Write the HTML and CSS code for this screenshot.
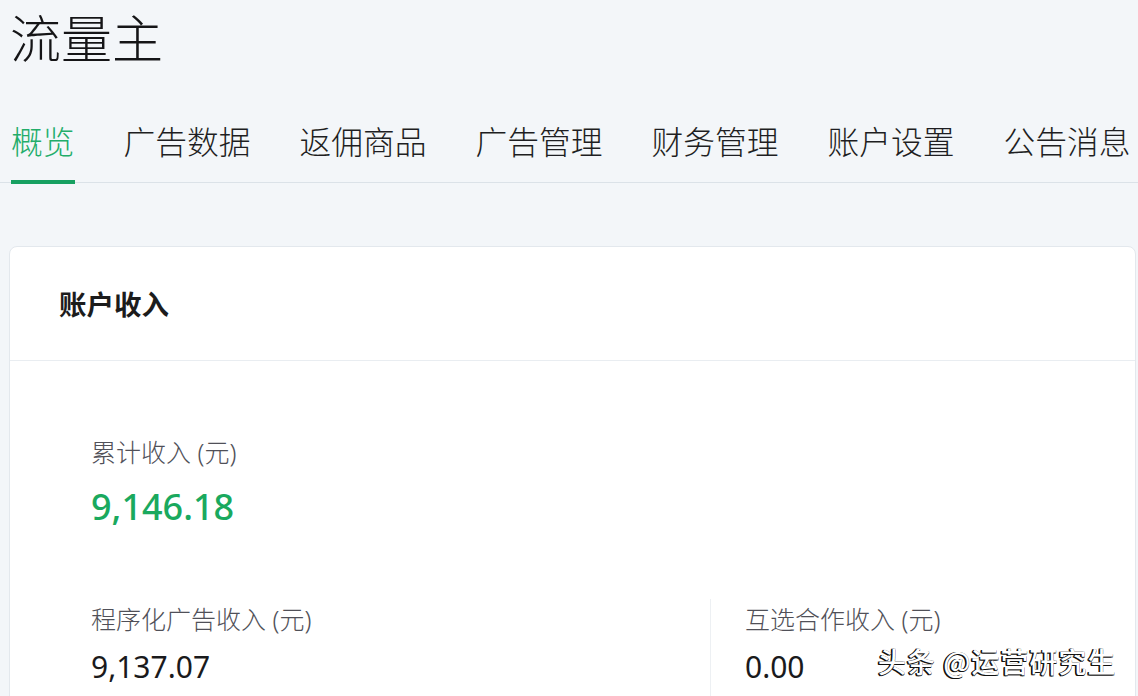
FILE: index.html
```html
<!DOCTYPE html>
<html lang="zh-CN">
<head>
<meta charset="utf-8">
<title>流量主</title>
<link rel="stylesheet" href="styles.css">
</head>
<body>
<div class="page">
  <h1 class="title">流量主</h1>
  <nav class="tabs">
    <a class="tab active">概览</a>
    <a class="tab">广告数据</a>
    <a class="tab">返佣商品</a>
    <a class="tab">广告管理</a>
    <a class="tab">财务管理</a>
    <a class="tab">账户设置</a>
    <a class="tab">公告消息</a>
  </nav>
  <section class="card">
    <div class="card-head">账户收入</div>
    <div class="card-body">
      <div class="stat total">
        <div class="label">累计收入 (元)</div>
        <div class="value green">9,146.18</div>
      </div>
      <div class="row">
        <div class="cell">
          <div class="label">程序化广告收入 (元)</div>
          <div class="value">9,137.07</div>
        </div>
        <div class="cell split">
          <div class="label">互选合作收入 (元)</div>
          <div class="value">0.00</div>
        </div>
      </div>
    </div>
  </section>
  <div class="watermark">头条 @运营研究生</div>
</div>
</body>
</html>
```
FILE: styles.css
```css
html, body {
  margin: 0;
  padding: 0;
  background: #f3f6f9;
  height: 696px;
  overflow: hidden;
}
body {
  font-family: "Noto Sans", "Noto Sans CJK SC", sans-serif;
  color: #1d1d20;
}
.page {
  position: relative;
  height: 696px;
  overflow: hidden;
}
.title {
  margin: 11px 0 0 0;
  padding-left: 10px;
  font-family: "Noto Sans CJK SC", sans-serif;
  font-weight: 300;
  font-size: 51px;
  line-height: 51px;
  height: 51px;
  color: #151517;
}
.tabs {
  display: flex;
  gap: 49px;
  margin-top: 63px;
  padding-left: 11px;
  border-bottom: 1px solid #dbe2e8;
}
.tab {
  font-family: "Noto Sans CJK SC", sans-serif;
  font-weight: 300;
  font-size: 31.75px;
  line-height: 31.75px;
  color: #1e1e22;
  padding-bottom: 23px;
  border-bottom: 4px solid transparent;
  margin-bottom: -2px;
  white-space: nowrap;
}
.tab.active {
  color: #22ad6a;
  border-bottom-color: #17a061;
}
.card {
  margin: 63px 2px 0 9px;
  background: #fff;
  border: 1px solid #e3e8ed;
  border-radius: 8px;
}
.card-head {
  height: 113px;
  display: flex;
  align-items: center;
  padding-left: 49px;
  border-bottom: 1px solid #e9edf1;
  font-family: "Noto Sans CJK SC", sans-serif;
  font-weight: 700;
  font-size: 27.5px;
  color: #1c1c1c;
}
.card-body {
  padding: 79px 0 0 81px;
}
.label {
  font-weight: 300;
  font-size: 25px;
  line-height: 25px;
  color: #505058;
  white-space: nowrap;
}
.value {
  font-weight: 400;
  font-size: 30px;
  line-height: 30px;
  margin-top: 20px;
  color: #1a1a1c;
}
.value.green {
  font-weight: 500;
  font-size: 36px;
  line-height: 36px;
  margin-top: 24px;
  color: #1aa95e;
}
.row {
  display: grid;
  grid-template-columns: 619px 1fr;
  margin-top: 74.5px;
}
.cell {
  padding: 7.3px 0 40px 0;
}
.cell.split {
  border-left: 1px solid #edf0f3;
  padding-left: 34px;
}
.watermark {
  position: absolute;
  left: 878px;
  top: 645px;
  font-family: "Noto Sans CJK SC", sans-serif;
  font-weight: 500;
  font-size: 28px;
  line-height: 32px;
  letter-spacing: 1px;
  color: #ffffff;
  text-shadow: -1.5px 1px 0 #111, -1.5px 0 0 #111, 0 1px 0 #222, 0 -0.5px 0 #444;
  white-space: nowrap;
}
```
